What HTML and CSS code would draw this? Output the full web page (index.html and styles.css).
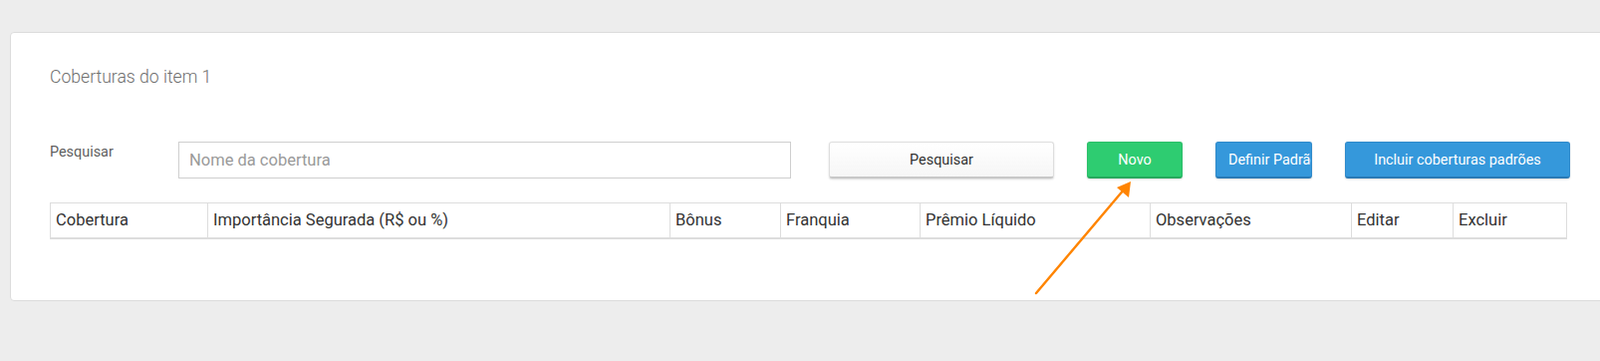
FILE: index.html
```html
<!DOCTYPE html>
<html lang="pt-BR">
<head>
    <meta charset="UTF-8">
    <title>Coberturas do item</title>
    <link rel="stylesheet" href="styles.css">
</head>
<body>
    <div class="panel">
        <h3 class="panel-title">Coberturas do item 1</h3>

        <div class="search-row">
            <label class="search-label" for="busca">Pesquisar</label>
            <input type="text" id="busca" class="search-input" placeholder="Nome da cobertura">
            <button class="btn btn-default btn-search">Pesquisar</button>
            <button class="btn btn-success btn-novo">Novo</button>
            <button class="btn btn-primary btn-definir">Definir Padrão</button>
            <button class="btn btn-primary btn-incluir">Incluir coberturas padrões</button>
        </div>

        <table class="coverage-table">
            <thead>
                <tr>
                    <th class="col-cobertura">Cobertura</th>
                    <th class="col-importancia">Importância Segurada (R$ ou %)</th>
                    <th class="col-bonus">Bônus</th>
                    <th class="col-franquia">Franquia</th>
                    <th class="col-premio">Prêmio Líquido</th>
                    <th class="col-obs">Observações</th>
                    <th class="col-editar">Editar</th>
                    <th class="col-excluir">Excluir</th>
                </tr>
            </thead>
        </table>
    </div>

    <!-- seta de destaque sobre o botao Novo -->
    <svg class="arrow-note" width="120" height="130" viewBox="0 0 120 130">
        <line x1="5" y1="117" x2="94" y2="12" stroke="#ff8400" stroke-width="2.4" stroke-linecap="round"/>
        <polygon points="100,5 98,21 86,11" fill="#ff8400"/>
    </svg>
</body>
</html>
```

FILE: styles.css
```css
body {
    margin: 0;
    background-color: #ededed;
    font-family: Roboto, "Liberation Sans", sans-serif;
    color: #333;
    padding: 32px 0 0 10px;
    height: 362px;
    box-sizing: border-box;
    overflow: hidden;
    position: relative;
}
.panel {
    width: 1640px;
    height: 270px;
    box-sizing: border-box;
    background: #fff;
    border: 1px solid #dcdcdc;
    border-radius: 4px;
    padding: 32px 0 0 39px;
}
.panel-title {
    margin: 0;
    font-size: 17.6px;
    font-weight: 300;
    line-height: 24px;
    color: #707070;
}
.search-row {
    display: flex;
    align-items: flex-start;
    margin-top: 53px;
}
.search-label {
    width: 129px;
    flex: none;
    font-size: 14.4px;
    line-height: 20px;
    padding-top: 1px;
    color: #5f5f5f;
}
.search-input {
    width: 615px;
    height: 37px;
    flex: none;
    box-sizing: border-box;
    border: 1px solid #cfcfcf;
    border-radius: 0;
    padding: 0 10px;
    font-family: inherit;
    font-size: 16.5px;
    color: #555;
    outline: none;
}
.search-input::placeholder {
    color: #9a9a9a;
}
.btn {
    flex: none;
    height: 37px;
    box-sizing: border-box;
    font-family: inherit;
    font-size: 14.4px;
    border: 1px solid;
    border-bottom-width: 2px;
    border-radius: 3px;
    padding: 0 12px;
    white-space: nowrap;
    overflow: hidden;
    cursor: pointer;
    box-shadow: 0 1px 2px rgba(0, 0, 0, 0.15);
}
.btn-default {
    background: linear-gradient(#ffffff, #f6f6f6);
    border-color: #dedede #dedede #c8c8c8;
    color: #333;
}
.btn-success {
    background: #2ecc71;
    border-color: #2bbf69 #2bbf69 #26a95d;
    color: #fff;
}
.btn-primary {
    background: #3598db;
    border-color: #2f8acb #2f8acb #2a7ab5;
    color: #fff;
}
.btn-search {
    width: 226px;
    margin-left: 38px;
}
.btn-novo {
    width: 96px;
    margin-left: 33px;
}
.btn-definir {
    width: 97px;
    margin-left: 33px;
    text-align: left;
    padding: 0 0 0 12px;
}
.btn-incluir {
    width: 226px;
    margin-left: 33px;
}
.coverage-table {
    margin-top: 24px;
    width: 1522px;
    table-layout: fixed;
    border-collapse: collapse;
    border: 1px solid #dddddd;
}
.coverage-table th {
    box-sizing: border-box;
    text-align: left;
    font-weight: 400;
    font-size: 16.5px;
    line-height: 22px;
    padding: 6px 5px;
    color: #333;
    border-left: 1px solid #dddddd;
    border-bottom: 2px solid #dddddd;
    white-space: nowrap;
}
.col-cobertura { width: 158px; }
.col-importancia { width: 464px; }
.col-bonus { width: 111px; }
.col-franquia { width: 140px; }
.col-premio { width: 231px; }
.col-obs { width: 202px; }
.col-editar { width: 102px; }
.col-excluir { width: 114px; }
.arrow-note {
    position: absolute;
    left: 1035px;
    top: 177px;
}
```
